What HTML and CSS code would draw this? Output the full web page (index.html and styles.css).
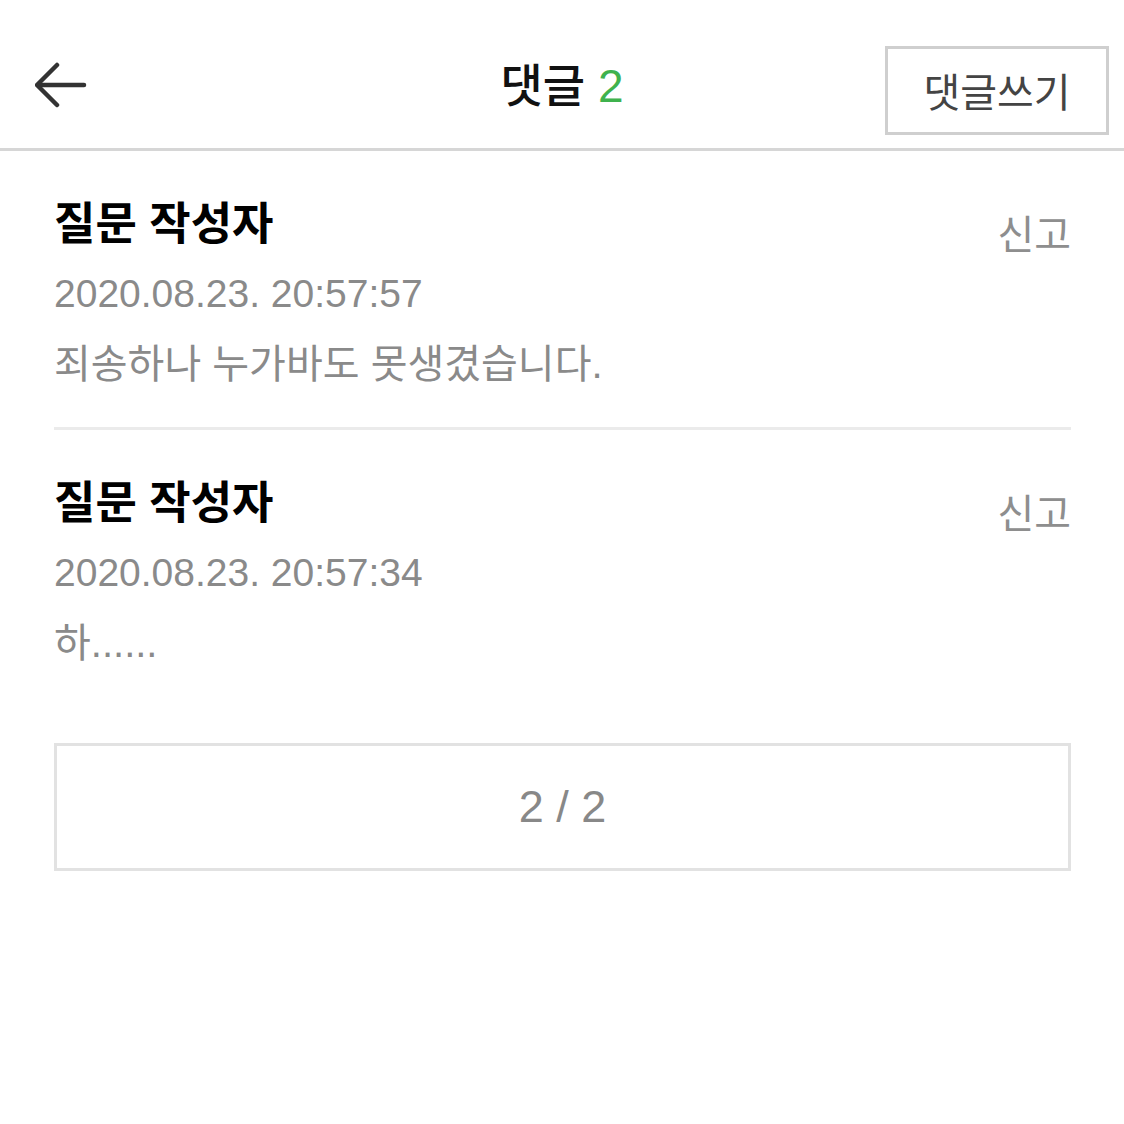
FILE: index.html
```html
<!DOCTYPE html>
<html lang="ko">
<head>
<meta charset="utf-8">
<title>댓글</title>
<link rel="stylesheet" href="styles.css">
</head>
<body>
<header class="topbar">
  <div class="topbar-left">
    <button class="back" aria-label="뒤로">
      <svg width="52" height="48" viewBox="0 0 52 48" fill="none" stroke="#333" stroke-width="4.5" stroke-linecap="round" stroke-linejoin="round">
        <path d="M49 23H3"/>
        <path d="M22 3L2 23L22 43"/>
      </svg>
    </button>
  </div>
  <h1 class="title">댓글 <span class="count">2</span></h1>
  <div class="topbar-right">
    <button class="write">댓글쓰기</button>
  </div>
</header>
<main class="content">
  <article class="comment">
    <div class="comment-head">
      <div class="author">질문 작성자</div>
      <a class="report">신고</a>
    </div>
    <div class="date">2020.08.23. 20:57:57</div>
    <p class="text">죄송하나 누가바도 못생겼습니다.</p>
  </article>
  <article class="comment">
    <div class="comment-head">
      <div class="author">질문 작성자</div>
      <a class="report">신고</a>
    </div>
    <div class="date">2020.08.23. 20:57:34</div>
    <p class="text">하......</p>
  </article>
  <div class="pager">2 / 2</div>
</main>
</body>
</html>
```
FILE: styles.css
```css
* { box-sizing: border-box; }
html, body {
  margin: 0;
  padding: 0;
  background: #fff;
}
body {
  font-family: "Liberation Sans", "Noto Sans CJK KR", sans-serif;
  color: #000;
}
.topbar {
  display: grid;
  grid-template-columns: 1fr auto 1fr;
  align-items: center;
  height: 151px;
  padding-top: 24px;
  border-bottom: 3px solid #d6d6d6;
}
.topbar-left {
  padding-left: 35px;
  display: flex;
  align-items: center;
}
.back {
  border: 0;
  background: none;
  padding: 0;
  display: flex;
}
.title {
  margin: 0;
  font-size: 46px;
  font-weight: 500;
  line-height: 60px;
  color: #111;
}
.count { color: #3fb24d; }
.topbar-right {
  display: flex;
  justify-content: flex-end;
  padding-right: 15px;
}
.write {
  width: 224px;
  height: 89px;
  margin-top: 8px;
  border: 3px solid #cfcfcf;
  background: #fff;
  font-family: "Liberation Sans", "Noto Sans CJK KR", sans-serif;
  font-size: 40px;
  color: #444;
  padding: 0;
}
.content {
  padding: 0 53px 0 54px;
}
.comment {
  padding: 39px 0 27px;
  border-bottom: 3px solid #ebebeb;
}
.comment:last-of-type {
  border-bottom: 0;
  padding-bottom: 0;
}
.comment-head {
  display: flex;
  justify-content: space-between;
  align-items: flex-start;
  height: 70px;
}
.author {
  font-size: 45px;
  font-weight: 700;
  line-height: 70px;
}
.report {
  font-size: 40px;
  line-height: 70px;
  color: #8e8e8e;
  margin-top: 10px;
}
.date {
  font-size: 39px;
  line-height: 68px;
  color: #8a8a8a;
}
.text {
  margin: 0;
  font-size: 40px;
  line-height: 72px;
  color: #8a8a8a;
}
.pager {
  margin-top: 64px;
  height: 128px;
  border: 3px solid #e2e2e2;
  display: flex;
  align-items: center;
  justify-content: center;
  font-size: 45px;
  color: #888;
}
```
